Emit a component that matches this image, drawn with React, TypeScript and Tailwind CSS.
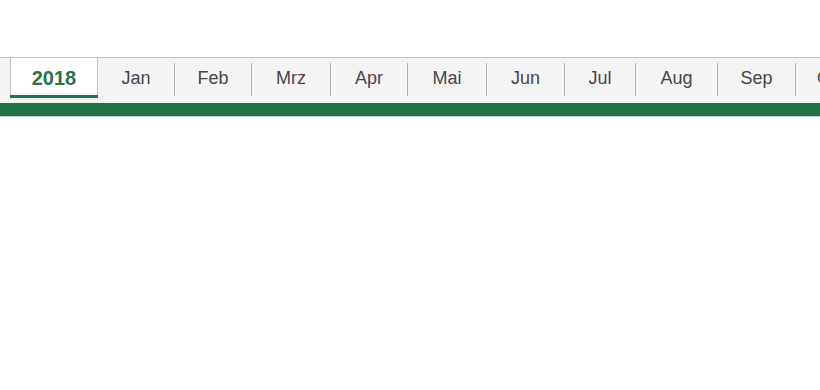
const months = [
  { label: "Jan", w: "w-[76px]" },
  { label: "Feb", w: "w-[76px]" },
  { label: "Mrz", w: "w-[78px]" },
  { label: "Apr", w: "w-[76px]" },
  { label: "Mai", w: "w-[78px]" },
  { label: "Jun", w: "w-[77px]" },
  { label: "Jul", w: "w-[70px]" },
  { label: "Aug", w: "w-[81px]" },
  { label: "Sep", w: "w-[77px]" },
];

export default function App() {
  return (
    <div className="h-[390px] w-[820px] overflow-hidden bg-white pt-[57px] font-['Liberation_Sans',Arial,sans-serif]">
      {/* sheet tab strip */}
      <div className="flex h-[46px] items-start border-t border-[#c4c4c4] bg-[#f4f4f4] pl-[10px]">
        <div className="-mt-px flex h-[41px] w-[88px] flex-none flex-col border-x border-t border-[#c4c4c4] bg-white">
          <div className="flex flex-1 items-center justify-center pt-[2px] text-[20px] font-bold text-[#2a7349]">
            2018
          </div>
          <div className="-mx-px h-[3px] bg-[#237548]" />
        </div>
        <div className="flex h-[40px] items-start">
          {months.map((m) => (
            <div key={m.label} className="flex h-full items-start">
              <div
                className={`${m.w} flex h-full flex-none items-center justify-center pt-[1px] text-[18px] text-[#48444c]`}
              >
                {m.label}
              </div>
              <div className="mt-[5px] h-[33px] w-px flex-none bg-[#aeaeae]" />
            </div>
          ))}
          <div className="flex h-full w-[70px] flex-none items-center justify-center pt-[1px] text-[18px] text-[#48444c]">
            Okt
          </div>
        </div>
      </div>
      <div className="h-[13px] bg-[#217346]" />
      <div className="h-px bg-[#b7d3c2]" />
    </div>
  );
}
